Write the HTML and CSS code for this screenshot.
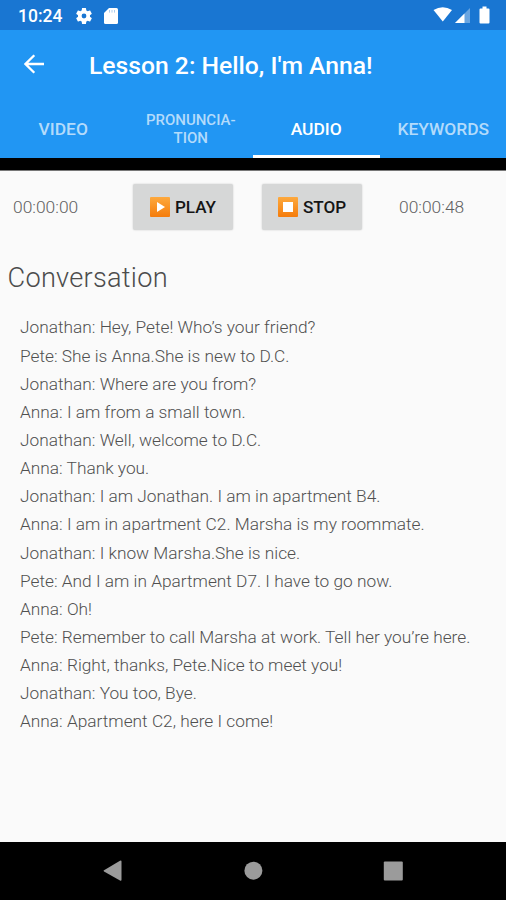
FILE: index.html
```html
<!DOCTYPE html>
<html lang="en">
<head>
<meta charset="utf-8">
<title>Lesson 2: Hello, I'm Anna!</title>
<link rel="stylesheet" href="styles.css">
</head>
<body>
<div class="screen">
  <div class="status">
    <span class="clock">10:24</span>
    <svg class="gear" width="18" height="18" viewBox="2 2 20 20"><path fill="#fff" d="M19.43 12.98c.04-.32.07-.64.07-.98s-.03-.66-.07-.98l2.11-1.65c.19-.15.24-.42.12-.64l-2-3.46c-.12-.22-.39-.3-.61-.22l-2.49 1c-.52-.4-1.08-.73-1.69-.98l-.38-2.65A.49.49 0 0 0 14 2h-4c-.25 0-.46.18-.49.42l-.38 2.65c-.61.25-1.17.59-1.69.98l-2.49-1c-.23-.09-.49 0-.61.22l-2 3.46c-.13.22-.07.49.12.64l2.11 1.65c-.04.32-.07.65-.07.98s.03.66.07.98l-2.11 1.65c-.19.15-.24.42-.12.64l2 3.46c.12.22.39.3.61.22l2.49-1c.52.4 1.08.73 1.69.98l.38 2.65c.03.24.24.42.49.42h4c.25 0 .46-.18.49-.42l.38-2.65c.61-.25 1.17-.59 1.69-.98l2.49 1c.23.09.49 0 .61-.22l2-3.46c.12-.22.07-.49-.12-.64l-2.11-1.65zM12 15a3 3 0 1 1 0-6 3 3 0 0 1 0 6z"/></svg>
    <svg class="card" width="14" height="16" viewBox="0 0 14 16"><path fill="#fff" d="M5 0h7.500Q14 0 14 1.500v13Q14 16 12.500 16h-11Q0 16 0 14.500V5z"/><path stroke="#1976d2" stroke-width="1" d="M5.500 2v2.600M8 2v2.600M10.500 2v2.600" opacity=".35"/></svg>
    <svg class="signals" width="58" height="18" viewBox="0 0 58 18"><path fill="#fff" d="M.5 4Q9.800-1.500 19 4L9.800 15.500z"/><path fill="#fff" opacity=".35" d="M37 2v15H22z"/><path fill="#fff" d="M31.500 7.500V17H22z"/><path fill="#fff" d="M47.500 2.500h2V.5h4v2h2q1 0 1 1v13q0 1-1 1h-8q-1 0-1-1v-13q0-1 1-1z"/></svg>
  </div>
  <header class="toolbar">
    <svg class="back" width="20" height="20" viewBox="0 0 20 20"><path fill="none" stroke="#fff" stroke-width="2.300" d="M20 10H1.800M10.300 1.200L1.500 10l8.800 8.800"/></svg>
    <h1>Lesson 2: Hello, I'm Anna!</h1>
  </header>
  <nav class="tabs">
    <div class="tab">VIDEO</div>
    <div class="tab two-line">PRONUNCIA-<br>TION</div>
    <div class="tab active">AUDIO</div>
    <div class="tab">KEYWORDS</div>
  </nav>
  <div class="divider"></div>
  <main>
    <div class="player">
      <span class="time">00:00:00</span>
      <button class="btn play"><svg width="20" height="20" viewBox="0 0 20 20"><defs><linearGradient id="orange" x2="0" y2="1"><stop stop-color="#fda93e"/><stop offset="1" stop-color="#f57c0b"/></linearGradient></defs><rect width="20" height="20" rx="1" fill="url(#orange)"/><path fill="#fff" d="M7 5l8 5-8 5z"/></svg><span>PLAY</span></button>
      <button class="btn stop"><svg width="20" height="20" viewBox="0 0 20 20"><rect width="20" height="20" rx="1" fill="url(#orange)"/><rect x="5" y="5" width="10" height="10" fill="#fff"/></svg><span>STOP</span></button>
      <span class="time end">00:00:48</span>
    </div>
    <h2>Conversation</h2>
    <div class="lines">
      <p>Jonathan: Hey, Pete! Who’s your friend?</p>
      <p>Pete: She is Anna.She is new to D.C.</p>
      <p>Jonathan: Where are you from?</p>
      <p>Anna: I am from a small town.</p>
      <p>Jonathan: Well, welcome to D.C.</p>
      <p>Anna: Thank you.</p>
      <p>Jonathan: I am Jonathan. I am in apartment B4.</p>
      <p>Anna: I am in apartment C2. Marsha is my roommate.</p>
      <p>Jonathan: I know Marsha.She is nice.</p>
      <p>Pete: And I am in Apartment D7. I have to go now.</p>
      <p>Anna: Oh!</p>
      <p>Pete: Remember to call Marsha at work. Tell her you’re here.</p>
      <p>Anna: Right, thanks, Pete.Nice to meet you!</p>
      <p>Jonathan: You too, Bye.</p>
      <p>Anna: Apartment C2, here I come!</p>
    </div>
  </main>
  <footer class="navbar">
    <svg width="20" height="22" viewBox="0 0 20 22"><path fill="#9b9b9b" d="M1 10.300L17 .8q1.500-.8 1.500.8v18.200q0 1.600-1.500.8L1 11.500q-1-.6 0-1.200z"/></svg>
    <svg width="20" height="22" viewBox="0 0 20 22"><circle cx="10.400" cy="10.700" r="9" fill="#9b9b9b"/></svg>
    <svg width="20" height="22" viewBox="0 0 20 22"><rect x=".8" y="1.500" width="19" height="19" rx="1" fill="#9b9b9b"/></svg>
  </footer>
</div>
</body>
</html>
```
FILE: styles.css
```css
* { box-sizing: border-box; }
body { margin: 0; font-family: Roboto, sans-serif; }
h1, h2, p { margin: 0; }
svg { display: block; flex: none; }
.screen { width: 506px; height: 900px; display: flex; flex-direction: column; background: #fafafa; overflow: hidden; }
.status { height: 30px; flex: none; display: flex; align-items: center; padding: 0 16px 0 18px; background: #1976d2; color: #fff; }
.clock { width: 58px; font-size: 17.5px; font-weight: 500; line-height: 30px; padding-top: 2px; white-space: nowrap; }
.gear { width: 16px; height: 16px; margin-top: 1px; }
.card { margin: 1px 0 0 12px; }
.signals { margin-left: auto; margin-right: -1px; }
.toolbar { height: 70px; flex: none; display: flex; align-items: center; padding: 0 24px; background: #2196f3; color: #fff; }
.back { margin-top: -2px; }
.toolbar h1 { margin-left: 45px; padding-top: 1px; font-size: 24.7px; font-weight: 500; line-height: 30px; white-space: nowrap; }
.tabs { height: 58px; flex: none; display: grid; grid-template-columns: repeat(4, 126.5px); background: #2196f3; color: #b3dbfb; }
.tab { display: flex; align-items: center; justify-content: center; text-align: center; font-size: 17.4px; font-weight: 500; border-bottom: 3px solid transparent; padding: 2px 0 0 0; }
.two-line { font-size: 15px; line-height: 18px; padding-left: 2px; }
.active { color: #fff; border-bottom-color: #fff; }
.tab:last-child { padding-left: 1px; }
.divider { height: 13px; flex: none; background: #000; border-bottom: 1px solid #777; }
main { flex: 1; color: #757575; font-weight: 300; }
.player { display: flex; align-items: center; padding: 13px 0 0 13px; }
.time { width: 120px; flex: none; font-size: 17.4px; font-weight: 300; color: #606060; }
.time.end { width: auto; margin-left: 37px; }
.btn { display: flex; flex: none; align-items: center; justify-content: center; gap: 5px; width: 100px; height: 46px; padding: 0; border: 0; border-radius: 2px; background: #d6d7d7; color: #151515; font: 500 17.1px/20px Roboto, sans-serif; box-shadow: 0 0 2px rgba(0, 0, 0, .2); }
.stop { margin-left: 29px; }
h2 { padding-left: 7.5px; margin-top: 30px; font-size: 27.2px; line-height: 36px; font-weight: 300; color: #4c4c4c; letter-spacing: .25px; }
.lines { padding: 17.4px 0 0 20px; }
.lines p { height: 28.15px; font-size: 17.29px; line-height: 28.15px; color: #505050; white-space: nowrap; }
.navbar { height: 58px; flex: none; display: flex; justify-content: center; gap: 120px; padding-top: 18px; background: #000; }
```
